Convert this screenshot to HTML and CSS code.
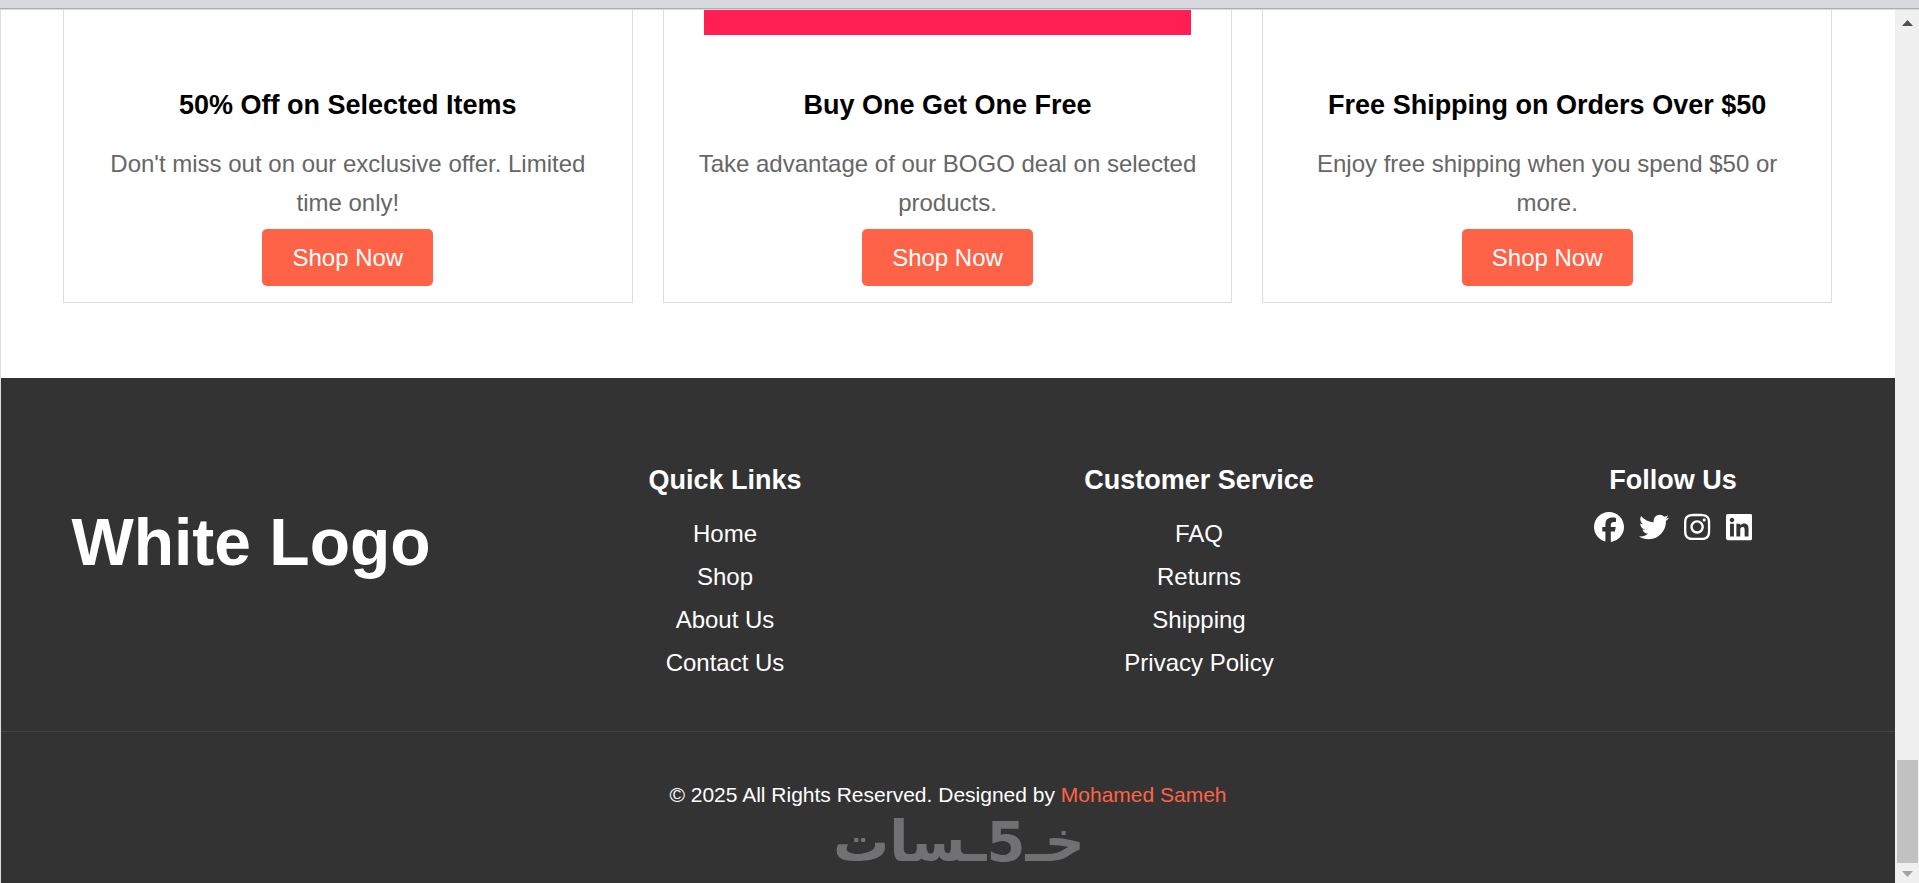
FILE: index.html
```html
<!DOCTYPE html>
<html lang="en">
<head>
    <meta charset="UTF-8">
    <meta name="viewport" content="width=device-width, initial-scale=1.0">
    <title>Special Offers</title>
    <link rel="stylesheet" href="styles.css">
</head>
<body>
    <div class="top-strip"></div>

    <div class="window">
        <div class="page">
            <!-- Offers -->
            <main class="offers">
                <div class="offer-card">
                    <div class="offer-image"></div>
                    <h3>50% Off on Selected Items</h3>
                    <p>Don't miss out on our exclusive offer. Limited time only!</p>
                    <a href="#" class="shop-button">Shop Now</a>
                </div>
                <div class="offer-card">
                    <div class="offer-image offer-image-pink"></div>
                    <h3>Buy One Get One Free</h3>
                    <p>Take advantage of our BOGO deal on selected products.</p>
                    <a href="#" class="shop-button">Shop Now</a>
                </div>
                <div class="offer-card">
                    <div class="offer-image"></div>
                    <h3>Free Shipping on Orders Over $50</h3>
                    <p>Enjoy free shipping when you spend $50 or more.</p>
                    <a href="#" class="shop-button">Shop Now</a>
                </div>
            </main>

            <!-- Footer -->
            <footer class="footer">
                <div class="footer-columns">
                    <div class="footer-logo">White Logo</div>
                    <div class="footer-column">
                        <h3>Quick Links</h3>
                        <ul>
                            <li><a href="#">Home</a></li>
                            <li><a href="#">Shop</a></li>
                            <li><a href="#">About Us</a></li>
                            <li><a href="#">Contact Us</a></li>
                        </ul>
                    </div>
                    <div class="footer-column">
                        <h3>Customer Service</h3>
                        <ul>
                            <li><a href="#">FAQ</a></li>
                            <li><a href="#">Returns</a></li>
                            <li><a href="#">Shipping</a></li>
                            <li><a href="#">Privacy Policy</a></li>
                        </ul>
                    </div>
                    <div class="footer-column">
                        <h3>Follow Us</h3>
                        <div class="social">
                            <a href="#" aria-label="Facebook"><svg viewBox="0 0 512 512"><path d="M512 256C512 114.6 397.4 0 256 0S0 114.6 0 256C0 376 82.7 476.8 194.2 504.5V334.2H141.4V256h52.8V222.3c0-87.1 39.4-127.5 125-127.5c16.2 0 44.2 3.2 55.7 6.4V172c-6-.6-16.5-1-29.6-1c-42 0-58.2 15.9-58.2 57.2V256h83.6l-14.4 78.2H287V510.1C413.8 494.8 512 386.9 512 256h0z"/></svg></a>
                            <a href="#" aria-label="Twitter"><svg viewBox="0 0 512 512"><path d="M459.37 151.716c.325 4.548.325 9.097.325 13.645 0 138.72-105.583 298.558-298.558 298.558-59.452 0-114.68-17.219-161.137-47.106 8.447.974 16.568 1.299 25.34 1.299 49.055 0 94.213-16.568 130.274-44.832-46.132-.975-84.792-31.188-98.112-72.772 6.498.974 12.995 1.624 19.818 1.624 9.421 0 18.843-1.3 27.614-3.573-48.081-9.747-84.143-51.98-84.143-102.985v-1.299c13.969 7.797 30.214 12.67 47.431 13.319-28.264-18.843-46.781-51.005-46.781-87.391 0-19.492 5.197-37.36 14.294-52.954 51.655 63.675 129.3 105.258 216.365 109.807-1.624-7.797-2.599-15.918-2.599-24.04 0-57.828 46.782-104.934 104.934-104.934 30.213 0 57.502 12.67 76.67 33.137 23.715-4.548 46.456-13.32 66.599-25.34-7.798 24.366-24.366 44.833-46.132 57.827 21.117-2.273 41.584-8.122 60.426-16.243-14.292 20.791-32.161 39.308-52.628 54.253z"/></svg></a>
                            <a href="#" aria-label="Instagram"><svg viewBox="0 0 448 512"><path d="M224.1 141c-63.6 0-114.9 51.3-114.9 114.9s51.3 114.9 114.9 114.9S339 319.5 339 255.9 287.7 141 224.1 141zm0 189.6c-41.1 0-74.7-33.5-74.7-74.7s33.5-74.7 74.7-74.7 74.7 33.5 74.7 74.7-33.6 74.7-74.7 74.7zm146.4-194.3c0 14.9-12 26.8-26.8 26.8-14.9 0-26.8-12-26.8-26.8s12-26.8 26.8-26.8 26.8 12 26.8 26.8zm76.1 27.2c-1.7-35.9-9.9-67.7-36.2-93.9-26.2-26.2-58-34.4-93.9-36.2-37-2.1-147.9-2.1-184.9 0-35.8 1.7-67.6 9.9-93.9 36.1s-34.4 58-36.2 93.9c-2.1 37-2.1 147.9 0 184.9 1.7 35.9 9.9 67.7 36.2 93.9s58 34.4 93.9 36.2c37 2.1 147.9 2.1 184.9 0 35.9-1.7 67.7-9.9 93.9-36.2 26.2-26.2 34.4-58 36.2-93.9 2.1-37 2.1-147.8 0-184.8zM398.8 388c-7.8 19.6-22.9 34.7-42.6 42.6-29.5 11.7-99.5 9-132.1 9s-102.7 2.6-132.1-9c-19.6-7.8-34.7-22.9-42.6-42.6-11.7-29.5-9-99.5-9-132.1s-2.6-102.7 9-132.1c7.8-19.6 22.9-34.7 42.6-42.6 29.5-11.7 99.5-9 132.1-9s102.7-2.6 132.1 9c19.6 7.8 34.7 22.9 42.6 42.6 11.7 29.5 9 99.5 9 132.1s2.7 102.7-9 132.1z"/></svg></a>
                            <a href="#" aria-label="LinkedIn"><svg viewBox="0 0 448 512"><path d="M416 32H31.9C14.3 32 0 46.5 0 64.3v383.4C0 465.5 14.3 480 31.9 480H416c17.6 0 32-14.5 32-32.3V64.3c0-17.8-14.4-32.3-32-32.3zM135.4 416H69V202.2h66.5V416zm-33.2-243c-21.3 0-38.5-17.3-38.5-38.5S80.9 96 102.2 96c21.2 0 38.5 17.3 38.5 38.5 0 21.3-17.2 38.5-38.5 38.5zm282.1 243h-66.4V312c0-24.8-.5-56.7-34.5-56.7-34.6 0-39.9 27-39.9 54.9V416h-66.4V202.2h63.7v29.2h.9c8.9-16.8 30.6-34.5 62.9-34.5 67.2 0 79.7 44.3 79.7 79.9V416z"/></svg></a>
                        </div>
                    </div>
                </div>

                <div class="footer-bottom">
                    <p>© 2025 All Rights Reserved. Designed by <a href="#">Mohamed Sameh</a></p>
                    <div class="watermark" dir="rtl" lang="ar"><span>خـ</span><span>5</span><span>ـسات</span></div>
                </div>
            </footer>
        </div>

        <!-- Scrollbar -->
        <div class="scrollbar">
            <svg class="arrow" viewBox="0 0 11 6"><path d="M5.5 0L11 6H0z"/></svg>
            <div class="thumb"></div>
            <svg class="arrow arrow-down" viewBox="0 0 11 6"><path d="M0 0h11L5.5 6z"/></svg>
        </div>
    </div>
</body>
</html>
```
FILE: styles.css
```css
* {
    margin: 0;
    padding: 0;
    box-sizing: border-box;
}

body {
    display: flex;
    flex-direction: column;
    min-height: 100vh;
    background-color: #fff;
    font-family: "Liberation Sans", Arial, sans-serif;
    font-size: 24px;
}

a {
    text-decoration: none;
}

.top-strip {
    height: 10px;
    background-color: #d8dadf;
    border-bottom: 1px solid #d9d9d9;
    box-shadow: inset 0 -1px #acaeb2;
}

.window {
    display: flex;
    flex: 1;
}

.page {
    display: flex;
    flex-direction: column;
    flex: 1;
    border-left: 1px solid #ddd;
}

/* Offers */
.offers {
    display: grid;
    grid-template-columns: repeat(3, 1fr);
    gap: 30px;
    padding: 0 63px 75px 62px;
}

.offer-card {
    display: flex;
    flex-direction: column;
    align-items: center;
    padding: 0 25px 16px;
    border: 1px solid #ddd;
    border-top: none;
    text-align: center;
}

.offer-image {
    width: 94%;
    height: 25px;
    margin-bottom: 54px;
}

.offer-image-pink {
    background-color: #ff1f52;
}

.offer-card h3 {
    margin-bottom: 23px;
    font-size: 27px;
    line-height: 32px;
    color: #000;
}

.offer-card p {
    margin-bottom: 7px;
    line-height: 39px;
    color: #666;
}

.shop-button {
    padding: 15px 30px;
    border-radius: 5px;
    background-color: #ff6347;
    color: #fff;
    line-height: 27px;
}

/* Footer */
.footer {
    flex: 1;
    background-color: #333;
    color: #fff;
    text-align: center;
}

.footer-columns {
    display: grid;
    grid-template-columns: repeat(4, 1fr);
    gap: 100px;
    padding: 86px 35px 55px 63px;
}

.footer-logo {
    padding-top: 38px;
    font-size: 66px;
    font-weight: bold;
    line-height: 80px;
    white-space: nowrap;
}

.footer-column h3 {
    font-size: 27px;
    line-height: 32px;
}

.footer-column ul {
    display: flex;
    flex-direction: column;
    gap: 16px;
    margin-top: 24px;
    list-style: none;
    line-height: 27px;
}

.footer-column a {
    color: #fff;
}

.social {
    display: flex;
    justify-content: center;
    gap: 15px;
    margin-top: 16px;
}

.social svg {
    display: block;
    height: 30px;
    fill: #fff;
}

.footer-bottom {
    padding-top: 51px;
    border-top: 1px solid #444;
    font-size: 21px;
    line-height: 24px;
}

.footer-bottom a {
    color: #ff6347;
}

.watermark {
    display: flex;
    justify-content: center;
    align-items: baseline;
    padding-left: 22px;
    color: #717173;
    font-family: "DejaVu Sans", sans-serif;
    font-size: 56px;
    font-weight: bold;
    line-height: 70px;
}

/* Scrollbar */
.scrollbar {
    display: flex;
    flex-direction: column;
    align-items: center;
    width: 24px;
    padding: 10px 1px 6px 2px;
    background-color: #f0f0f0;
}

.arrow {
    width: 11px;
    height: 6px;
    fill: #505050;
}

.thumb {
    width: 100%;
    height: 103px;
    margin-top: auto;
    margin-bottom: 8px;
    background-color: #c1c1c1;
}

.arrow-down {
    fill: #a3a3a3;
}
```
